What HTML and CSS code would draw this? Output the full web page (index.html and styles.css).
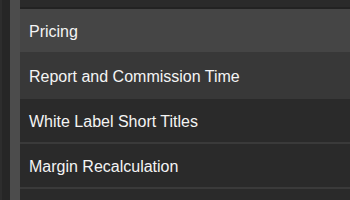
FILE: index.html
```html
<!DOCTYPE html>
<html lang="en">
<head>
  <meta charset="UTF-8" />
  <title>Settings Menu</title>
  <link rel="stylesheet" href="styles.css">
</head>
<body>
  <div class="layout">
    <!-- LEFT RAIL -->
    <div class="rail">
      <div class="rail-dark"></div>
      <div class="rail-light"></div>
    </div>

    <!-- MENU LIST -->
    <ul class="menu">
      <li class="menu-item top"></li>
      <li class="menu-item active">Pricing</li>
      <li class="menu-item alt">Report and Commission Time</li>
      <li class="menu-item">White Label Short Titles</li>
      <li class="menu-item">Margin Recalculation</li>
      <li class="menu-item"></li>
    </ul>
  </div>
</body>
</html>
```

FILE: styles.css
```css
:root {
  --bg-color: #2a2a2a;
  --row-border: #3a3a3a;
  --active-bg: #454545;
  --alt-bg: #383838;
  --text-color: #f4f4f4;
  --font-family: "Liberation Sans", Arial, sans-serif;
}
* {
  margin: 0;
  padding: 0;
  box-sizing: border-box;
}
body {
  background: var(--bg-color);
  color: var(--text-color);
  font-family: var(--font-family);
  overflow: hidden;
}
.layout {
  display: flex;
  height: 200px;
  overflow: hidden;
}

/* Left rail */
.rail {
  display: flex;
  flex-shrink: 0;
}
.rail-dark {
  width: 10px;
  background: #262626;
  border-left: 2px solid #2d2d2d;
}
.rail-light {
  width: 10px;
  background: #4c4c4c;
}

/* Menu */
.menu {
  list-style: none;
  flex: 1;
  margin-top: -36px;
}
.menu-item {
  height: 45px;
  padding: 2px 9px 0;
  display: flex;
  align-items: center;
  font-size: 16px;
  border-bottom: 2px solid var(--row-border);
}
.menu-item.top {
  border-bottom-color: #222222;
}
.menu-item.active {
  background: var(--active-bg);
  border-bottom-color: var(--alt-bg);
}
.menu-item.alt {
  background: var(--alt-bg);
  border-bottom-color: var(--alt-bg);
}
```
